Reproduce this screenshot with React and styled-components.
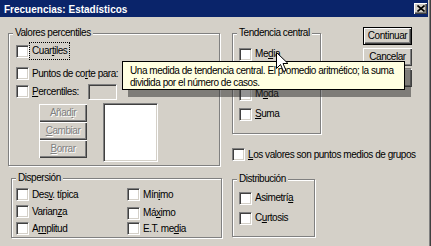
import React from "react";
import styled, { createGlobalStyle } from "styled-components";

const Global = createGlobalStyle`
  html, body { margin: 0; padding: 0; background: #D4D0C8; }
  body { font-family: "Liberation Sans", Arial, sans-serif; font-size: 10px; }
`;

const Window = styled.div`
  position: relative;
  width: 431px;
  height: 246px;
  overflow: hidden;
  background: #D4D0C8;
  box-shadow: inset -1px 0 0 #404040, inset -2px 0 0 #808080;
  font-family: "Liberation Sans", Arial, sans-serif;
  font-size: 10px;
  line-height: 12px;
  letter-spacing: -0.45px;
  color: #000;
  display: flex;
  flex-direction: column;
`;

const TitleBar = styled.div`
  width: 428px;
  height: 17px;
  flex: none;
  box-sizing: border-box;
  padding-left: 4px;
  background: #0A246A;
  display: flex;
  align-items: center;
`;

const TitleText = styled.span`
  flex: 1;
  margin-top: 2px;
  color: #fff;
  font-weight: bold;
  letter-spacing: 0;
  white-space: nowrap;
`;

const CloseBtn = styled.span`
  width: 13px;
  height: 11px;
  margin-right: 1px;
  box-sizing: border-box;
  background: #D4D0C8;
  box-shadow: inset 1px 1px 0 #fff, inset -1px -1px 0 #404040, inset -2px -2px 0 #808080;
  display: flex;
  align-items: center;
  justify-content: center;
`;

const Body = styled.div`
  display: flex;
  padding-left: 8px;
`;

const Column = styled.div`
  display: flex;
  flex-direction: column;
  width: ${(p) => (p.$w ? `${p.$w}px` : "auto")};
  margin-left: ${(p) => p.$ml || 0}px;
`;

const TopRow = styled.div`
  display: flex;
  align-items: flex-start;
`;

const GroupBox = styled.div`
  display: flex;
  flex-direction: column;
  box-sizing: border-box;
  width: ${(p) => p.$w}px;
  margin: ${(p) => p.$mt}px 0 0 ${(p) => p.$ml || 0}px;
  padding-bottom: ${(p) => p.$pb || 0}px;
  border: 1px solid #808080;
  box-shadow: inset 1px 1px 0 #fff, 1px 1px 0 #fff;
`;

const GroupLabel = styled.span`
  align-self: flex-start;
  height: 12px;
  margin: -7px 0 0 4px;
  padding: 0 2px;
  background: #D4D0C8;
  white-space: nowrap;
`;

const Stack = styled.div`
  display: flex;
  flex-direction: column;
  padding-top: ${(p) => p.$pt || 0}px;
`;

const Row = styled.div`
  display: flex;
  align-items: center;
  height: ${(p) => p.$h}px;
  margin-top: ${(p) => p.$mt || 0}px;
  padding-left: ${(p) => p.$pl || 0}px;
`;

const TwoColGrid = styled.div`
  display: grid;
  grid-template-columns: 111px auto;
  grid-auto-rows: 17px;
  align-items: center;
  padding: 2px 0 0 4px;
`;

const Cell = styled.div`
  display: flex;
  align-items: center;
  margin-top: ${(p) => p.$dy || 0}px;
`;

const Check = styled.span`
  flex: none;
  width: 13px;
  height: 13px;
  box-sizing: border-box;
  background: #fff;
  border: 1px solid;
  border-color: #808080 #fff #fff #808080;
  box-shadow: inset 1px 1px 0 #404040, inset -1px -1px 0 #D4D0C8;
`;

const Label = styled.span`
  flex: none;
  box-sizing: border-box;
  margin-left: 1px;
  padding: ${(p) => (p.$focus ? "2px 2px" : "0 2px")};
  outline: ${(p) => (p.$focus ? "1px dotted #000" : "none")};
  width: ${(p) => (p.$w ? `${p.$w}px` : "auto")};
  white-space: nowrap;
`;

const U = styled.span`
  text-decoration: underline;
  text-underline-offset: 1px;
`;

const TextField = styled.span`
  flex: none;
  width: 29px;
  height: 16px;
  box-sizing: border-box;
  background: #D4D0C8;
  border: 1px solid;
  border-color: #808080 #fff #fff #808080;
  box-shadow: inset 1px 1px 0 #404040, inset -1px -1px 0 #D4D0C8;
`;

const ListArea = styled.div`
  display: flex;
  align-items: flex-start;
  margin-top: 3px;
  padding-left: 30px;
`;

const ButtonStack = styled.div`
  display: flex;
  flex-direction: column;
  gap: ${(p) => p.$gap || 0}px;
  margin-top: ${(p) => p.$mt || 0}px;
  margin-left: ${(p) => p.$ml || 0}px;
`;

const Button = styled.div`
  width: ${(p) => p.$w}px;
  height: 18px;
  box-sizing: border-box;
  background: #D4D0C8;
  border: ${(p) => (p.$default ? "1px solid #000" : "none")};
  box-shadow: inset 1px 1px 0 #fff, inset -1px -1px 0 #404040, inset -2px -2px 0 #808080;
  display: flex;
  align-items: center;
  justify-content: center;
  color: ${(p) => (p.$disabled ? "#808080" : "#000")};
  text-shadow: ${(p) => (p.$disabled ? "1px 1px 0 #fff" : "none")};
  white-space: nowrap;
`;

const ListBox = styled.div`
  width: 55px;
  height: 59px;
  margin-left: 16px;
  box-sizing: border-box;
  background: #fff;
  border: 1px solid;
  border-color: #808080 #fff #fff #808080;
  box-shadow: inset 1px 1px 0 #404040, inset -1px -1px 0 #D4D0C8;
`;

const Tooltip = styled.div`
  position: absolute;
  left: 122px;
  top: 61px;
  width: 283px;
  height: 29px;
  box-sizing: border-box;
  padding: 3px 0 0 7px;
  background: #FFFFE1;
  border: 1px solid #000;
  box-shadow: 6px 7px 0 rgba(40, 40, 40, 0.5);
  white-space: nowrap;
  line-height: 12px;
`;

const Cursor = styled.svg`
  position: absolute;
  left: 276px;
  top: 52px;
`;

function CheckItem({ children, focus, w }) {
  return (
    <>
      <Check />
      <Label $focus={focus} $w={w}>{children}</Label>
    </>
  );
}

export default function App() {
  return (
    <>
      <Global />
      <Window>
        <TitleBar>
          <TitleText>Frecuencias: Estadísticos</TitleText>
          <CloseBtn>
            <svg width="8" height="7" viewBox="0 0 8 7">
              <path d="M0.5 0.5 L7.5 6.5 M7.5 0.5 L0.5 6.5" stroke="#000" strokeWidth="1.6" />
            </svg>
          </CloseBtn>
        </TitleBar>
        <Body>
          <Column $w={214}>
            <GroupBox $w={212} $mt={16} $pb={3}>
              <GroupLabel>Valores percentiles</GroupLabel>
              <Row $h={16} $mt={4} $pl={7}>
                <CheckItem focus>Cuar<U>t</U>iles</CheckItem>
              </Row>
              <Row $h={17} $mt={6} $pl={7}>
                <CheckItem>Puntos de co<U>r</U>te para:</CheckItem>
              </Row>
              <Row $h={17} $mt={1} $pl={7}>
                <CheckItem w={58}><U>P</U>ercentiles:</CheckItem>
                <TextField />
              </Row>
              <ListArea>
                <ButtonStack $mt={1}>
                  <Button $w={48} $disabled>Añad<U>i</U>r</Button>
                  <Button $w={48} $disabled><U>C</U>ambiar</Button>
                  <Button $w={48} $disabled><U>B</U>orrar</Button>
                </ButtonStack>
                <ListBox />
              </ListArea>
            </GroupBox>
            <GroupBox $w={211} $mt={12} $ml={3}>
              <GroupLabel>Dispersión</GroupLabel>
              <TwoColGrid>
                <Cell><CheckItem>Des<U>v</U>. típica</CheckItem></Cell>
                <Cell><CheckItem>Mín<U>i</U>mo</CheckItem></Cell>
                <Cell><CheckItem>Varian<U>z</U>a</CheckItem></Cell>
                <Cell $dy={3}><CheckItem>Má<U>x</U>imo</CheckItem></Cell>
                <Cell><CheckItem>A<U>m</U>plitud</CheckItem></Cell>
                <Cell><CheckItem>E.T. me<U>d</U>ia</CheckItem></Cell>
              </TwoColGrid>
            </GroupBox>
          </Column>
          <Column $ml={10}>
            <TopRow>
              <GroupBox $w={89} $mt={16} $pb={9}>
                <GroupLabel>Tendencia central</GroupLabel>
                <Stack $pt={5}>
                  <Row $h={20} $pl={6}><CheckItem>Me<U>d</U>ia</CheckItem></Row>
                  <Row $h={20} $pl={6}><CheckItem>Medi<U>a</U>na</CheckItem></Row>
                  <Row $h={20} $pl={6}><CheckItem>M<U>o</U>da</CheckItem></Row>
                  <Row $h={20} $pl={6}><CheckItem><U>S</U>uma</CheckItem></Row>
                </Stack>
              </GroupBox>
              <ButtonStack $mt={10} $ml={42} $gap={3}>
                <Button $w={49} $default>Continuar</Button>
                <Button $w={49}>Cancelar</Button>
                <Button $w={49}>Ayuda</Button>
              </ButtonStack>
            </TopRow>
            <Row $h={13} $mt={14}>
              <CheckItem><U>L</U>os valores son puntos medios de grupos</CheckItem>
            </Row>
            <GroupBox $w={83} $mt={18} $pb={8}>
              <GroupLabel>Distribución</GroupLabel>
              <Stack $pt={3}>
                <Row $h={20} $pl={6}><CheckItem>Asimetrí<U>a</U></CheckItem></Row>
                <Row $h={20} $pl={6}><CheckItem>C<U>u</U>rtosis</CheckItem></Row>
              </Stack>
            </GroupBox>
          </Column>
        </Body>
        <Tooltip>
          Una medida de tendencia central. El promedio aritmético; la suma
          <br />
          dividida por el número de casos.
        </Tooltip>
        <Cursor width="14" height="22" viewBox="0 0 14 22">
          <path
            d="M0.5 0.5 L0.5 16.5 L4.5 12.5 L7.5 19.5 L10 18.5 L7 11.5 L12 11.5 Z"
            fill="#fff"
            stroke="#000"
            strokeWidth="1"
          />
        </Cursor>
      </Window>
    </>
  );
}
